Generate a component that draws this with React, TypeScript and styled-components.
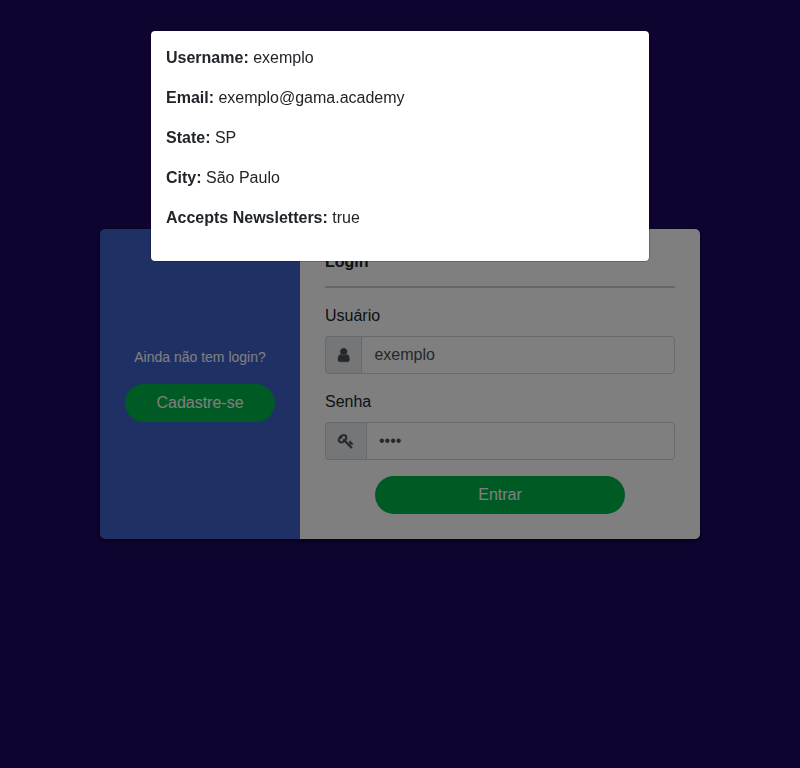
import React from "react";
import styled, { createGlobalStyle } from "styled-components";

const GlobalStyle = createGlobalStyle`
  *, *::before, *::after { box-sizing: border-box; }
  html { background: #1e0961; }
  body {
    margin: 0;
    background: #1e0961;
    color: #212529;
    font: 400 16px/1.5 "Liberation Sans", Arial, sans-serif;
  }
`;

const Page = styled.main`
  min-height: 100vh;
  display: flex;
  align-items: center;
  justify-content: center;
`;

const Card = styled.section`
  display: flex;
  width: 600px;
  height: 310px;
  border-radius: 5px;
  box-shadow: 0 2px 4px rgba(0, 0, 0, 0.6);
`;

const SignupPanel = styled.aside`
  width: 200px;
  padding: 0 25px;
  display: flex;
  flex-direction: column;
  justify-content: center;
  border-radius: 5px 0 0 5px;
  background: #3f61c9;
`;

const SignupText = styled.p`
  margin: 0 0 16px;
  font-size: 14px;
  line-height: 21px;
  text-align: center;
  color: #fff;
`;

const PillButton = styled.button<{ $width: number }>`
  display: block;
  width: ${(p) => p.$width}px;
  height: 38px;
  margin: 0 auto;
  padding: 0;
  border: 0;
  border-radius: 19px;
  background: #00b548;
  color: #fff;
  font: inherit;
`;

const LoginForm = styled.form`
  flex: 1;
  padding: 20px 25px 25px;
  border-radius: 0 5px 5px 0;
  background: #fff;
`;

const Title = styled.h1`
  margin: 0 0 16px;
  height: 39px;
  padding-top: 1px;
  border-bottom: 2px solid #cccccc;
  font-size: 16px;
  line-height: 24px;
`;

const Field = styled.div`
  margin-bottom: 16px;
`;

const Label = styled.label`
  display: block;
  height: 32px;
`;

const InputGroup = styled.div`
  display: flex;
  height: 38px;
`;

const Addon = styled.span`
  display: flex;
  align-items: center;
  padding: 0 12px;
  border: 1px solid #ced4da;
  border-right: 0;
  border-radius: 4px 0 0 4px;
  background: #e9ecef;
  color: #495057;
`;

const Icon = styled.svg<{ $width: number }>`
  display: block;
  width: ${(p) => p.$width}px;
  height: 16px;
  overflow: visible;
  fill: currentColor;
  stroke: currentColor;
  stroke-width: 45;
`;

const Input = styled.input`
  flex: 1;
  min-width: 0;
  padding: 6px 12px;
  border: 1px solid #ced4da;
  border-radius: 0 4px 4px 0;
  background: #fff;
  color: #495057;
  font: inherit;
`;

const Backdrop = styled.div`
  position: fixed;
  inset: 0;
  background: rgba(0, 0, 0, 0.5);
`;

const Modal = styled.div`
  position: absolute;
  inset: 0;
  padding-top: 30px;
`;

const Dialog = styled.div`
  width: 500px;
  height: 232px;
  margin: 0 auto;
  padding: 15px;
  border: 1px solid rgba(0, 0, 0, 0.2);
  border-radius: 5px;
  background: #fff;
  background-clip: padding-box;
`;

const Detail = styled.p`
  margin: 0 0 16px;
`;

const UserIcon = () => (
  <Icon $width={11.43} viewBox="256 0 1280 1792" aria-hidden="true">
    <path d="M1536 1399q0 109-62.5 187t-150.5 78h-854q-88 0-150.5-78t-62.5-187q0-85 8.5-160.5t31.5-152 58.5-131 94-89 134.5-34.5q131 128 313 128t313-128q76 0 134.5 34.5t94 89 58.5 131 31.5 152 8.5 160.5zm-256-887q0 159-112.5 271.5t-271.5 112.5-271.5-112.5-112.5-271.5 112.5-271.5 271.5-112.5 271.5 112.5 112.5 271.5z" />
  </Icon>
);

const KeyIcon = () => (
  <Icon $width={16} viewBox="0 0 1792 1792" aria-hidden="true">
    <path d="M832 512q0-80-56-136t-136-56-136 56-56 136q0 42 19 83-41-19-83-19-80 0-136 56t-56 136 56 136 136 56 136-56 56-136q0-42-19-83 41 19 83 19 80 0 136-56t56-136zm851 704q0 17-49 66t-66 49q-9 0-28.5-16t-36.5-33-38.5-40-24.5-26l-96 96 220 220q28 28 28 68 0 42-39 81t-81 39q-40 0-68-28l-671-671q-176 131-365 131-163 0-265.5-102.5t-102.5-265.5q0-160 95-313t248-248 313-95q163 0 265.5 102.5t102.5 265.5q0 189-131 365l355 355 96-96q-3-3-26-24.5t-40-38.5-33-36.5-16-28.5q0-17 49-66t66-49q13 0 23 10 6 6 46 44.5t82 79.5 86.5 86 73 78 28.5 41z" />
  </Icon>
);

const details = [
  ["Username", "exemplo"],
  ["Email", "exemplo@gama.academy"],
  ["State", "SP"],
  ["City", "São Paulo"],
  ["Accepts Newsletters", "true"],
];

export default function App() {
  return (
    <>
      <GlobalStyle />
      <Page>
        <Card>
          <SignupPanel>
            <SignupText>Ainda não tem login?</SignupText>
            <PillButton $width={150}>Cadastre-se</PillButton>
          </SignupPanel>
          <LoginForm>
            <Title>Login</Title>
            <Field>
              <Label htmlFor="user">Usuário</Label>
              <InputGroup>
                <Addon><UserIcon /></Addon>
                <Input id="user" defaultValue="exemplo" />
              </InputGroup>
            </Field>
            <Field>
              <Label htmlFor="password">Senha</Label>
              <InputGroup>
                <Addon><KeyIcon /></Addon>
                <Input id="password" type="password" defaultValue="1234" />
              </InputGroup>
            </Field>
            <PillButton type="button" $width={250}>Entrar</PillButton>
          </LoginForm>
        </Card>
      </Page>
      <Backdrop />
      <Modal>
        <Dialog role="dialog" aria-label="User details">
          {details.map(([name, value]) => (
            <Detail key={name}><strong>{name}:</strong> {value}</Detail>
          ))}
        </Dialog>
      </Modal>
    </>
  );
}
